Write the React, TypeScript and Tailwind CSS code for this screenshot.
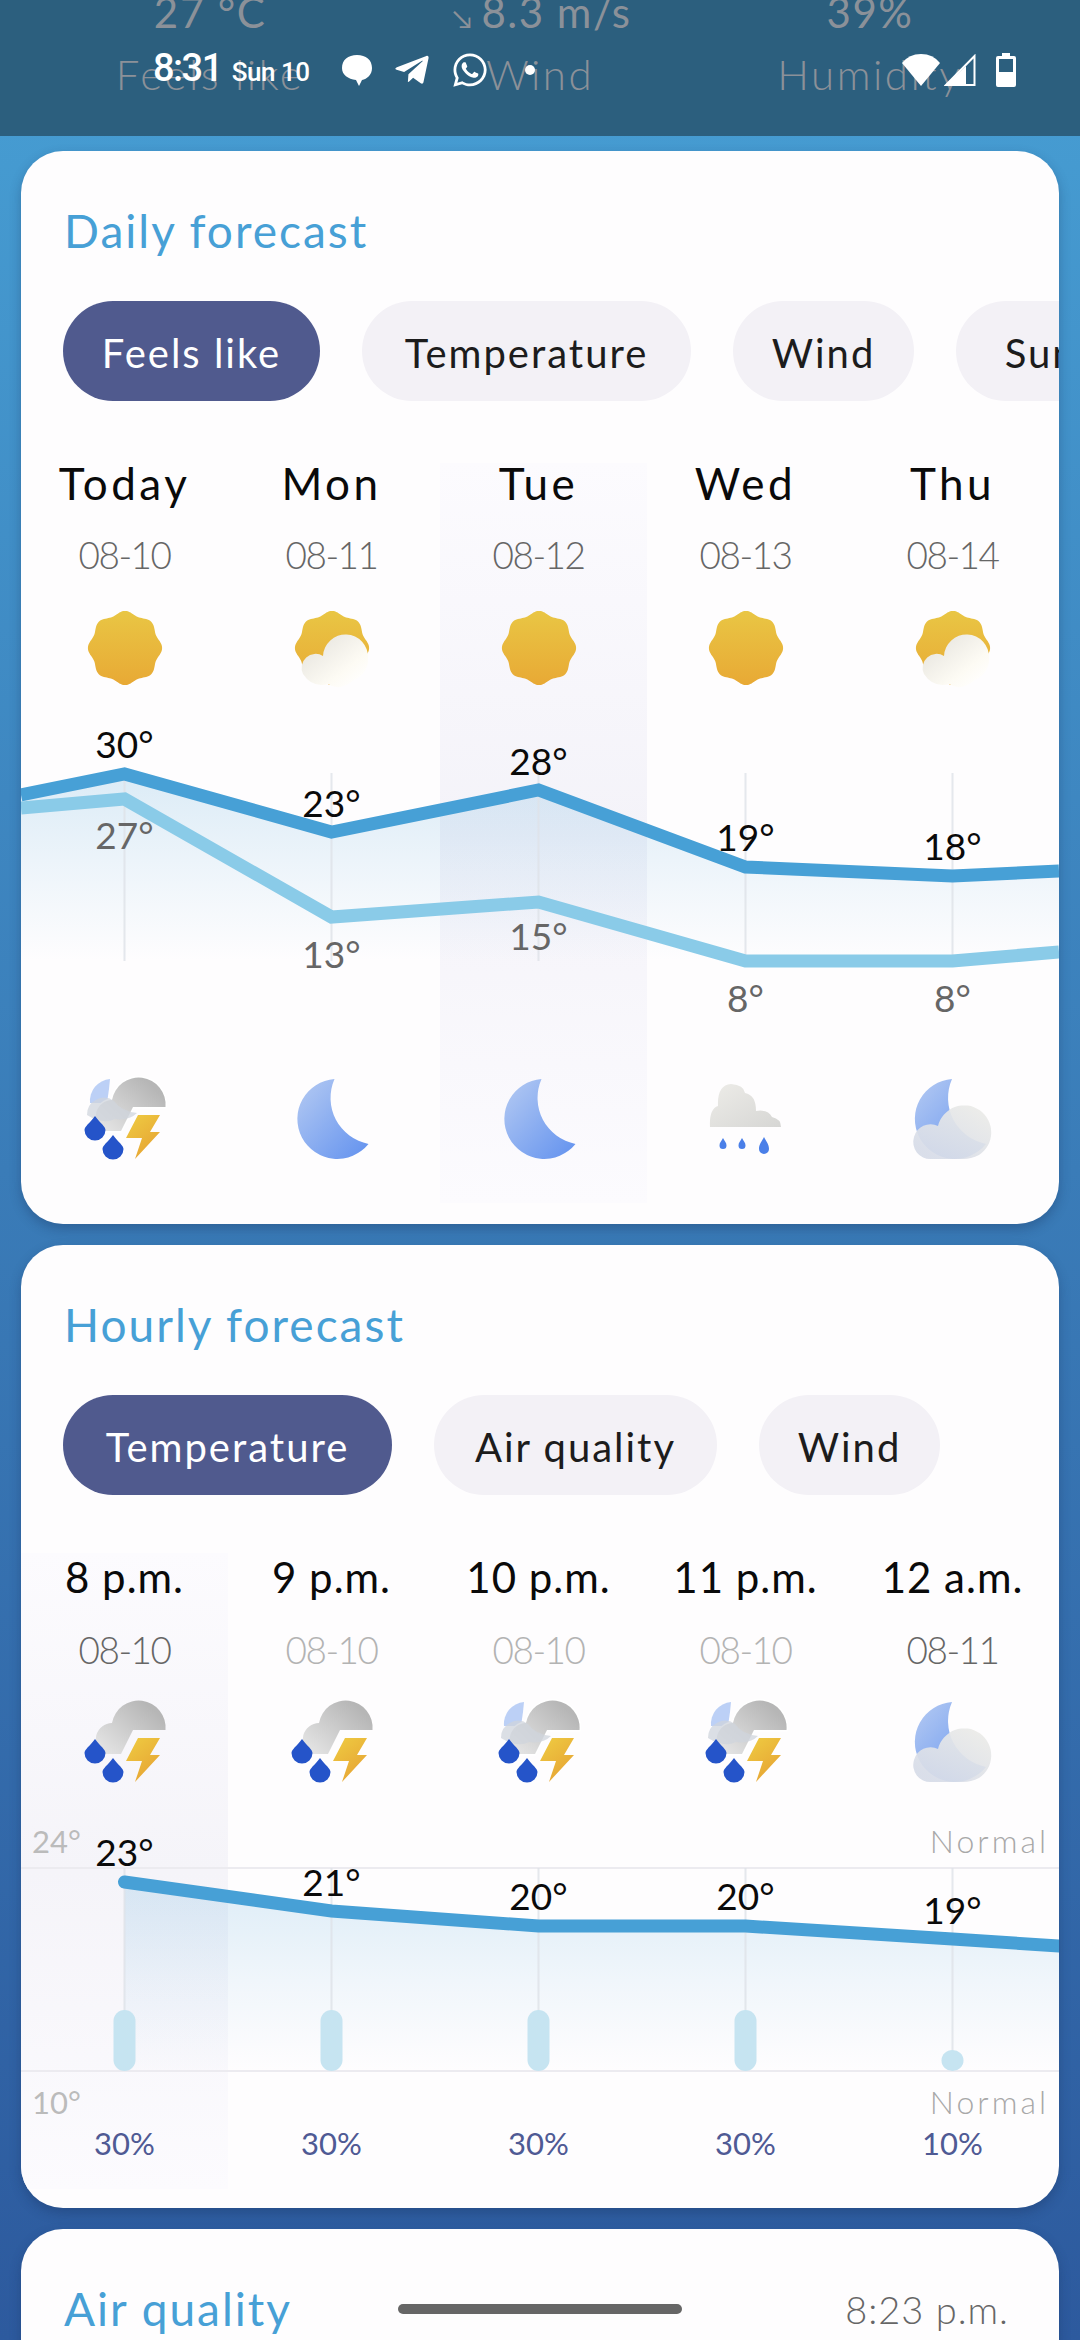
import React from 'react';
import { FaTelegramPlane, FaWhatsapp } from 'react-icons/fa';

const sunPath = (() => {
  const pts: string[] = [];
  for (let i = 0; i < 160; i++) {
    const t = (i / 160) * Math.PI * 2;
    const r = 35.3 + 1.8 * Math.cos(8 * t);
    pts.push(`${(40 + r * Math.sin(t)).toFixed(2)} ${(40 - r * Math.cos(t)).toFixed(2)}`);
  }
  return `M${pts.join('L')}Z`;
})();

const Defs = () => (
  <defs>
    <linearGradient id="sunG" x1="0" y1="0" x2="0" y2="1">
      <stop offset="0" stopColor="#e9c644" />
      <stop offset="1" stopColor="#e8a935" />
    </linearGradient>
    <linearGradient id="softCloud" x1="0.1" y1="0.1" x2="0.85" y2="0.85">
      <stop offset="0" stopColor="#e6e4de" />
      <stop offset="0.75" stopColor="#fdfbf4" />
      <stop offset="1" stopColor="#fffefc" />
    </linearGradient>
    <linearGradient id="moonG" x1="0.1" y1="0.1" x2="0.9" y2="0.9">
      <stop offset="0" stopColor="#adc5f2" />
      <stop offset="1" stopColor="#6a97ef" />
    </linearGradient>
    <linearGradient id="greyCloud" x1="0.05" y1="0.9" x2="0.85" y2="0.2">
      <stop offset="0" stopColor="#e4e4e4" />
      <stop offset="1" stopColor="#b6b6b6" />
    </linearGradient>
    <linearGradient id="bolt" x1="0.2" y1="0" x2="0.8" y2="1">
      <stop offset="0" stopColor="#eec941" />
      <stop offset="1" stopColor="#e6a133" />
    </linearGradient>
    <linearGradient id="rainCloud" x1="0" y1="0" x2="1" y2="1">
      <stop offset="0" stopColor="#edece8" />
      <stop offset="1" stopColor="#d6d6d4" />
    </linearGradient>
    <linearGradient id="nightCloud" x1="0.9" y1="0.1" x2="0.2" y2="0.9">
      <stop offset="0" stopColor="#ebebe8" />
      <stop offset="1" stopColor="#d7dce8" />
    </linearGradient>
  </defs>
);

const IconBox = ({ children }: { children: React.ReactNode }) => (
  <svg viewBox="0 0 80 80" className="w-20 h-20 overflow-visible mx-auto">
    <Defs />
    {children}
  </svg>
);

const Sun = () => (
  <IconBox>
    <path d={sunPath} fill="url(#sunG)" />
  </IconBox>
);

const SunCloud = () => (
  <IconBox>
    <path d={sunPath} fill="url(#sunG)" />
    <path
      d="M11 66 A14 14 0 0 1 31 48 A21 21 0 0 1 76 50 A22 22 0 0 1 62 72 Q48 84 36 76 Q20 80 11 66Z"
      fill="url(#softCloud)"
    />
  </IconBox>
);

const Moon = () => (
  <IconBox>
    <path d="M42.5 0 A40 40 0 1 0 76.5 65 A47 47 0 0 1 42.5 0Z" fill="url(#moonG)" />
  </IconBox>
);

const MoonCloud = () => (
  <IconBox>
    <path d="M39 0 A40 40 0 1 0 73 65 A47 47 0 0 1 39 0Z" fill="url(#moonG)" />
    <path
      d="M1 58 A17 17 0 0 1 25 47 A27 27 0 1 1 66 76 Q58 80 50 80 L18 80 A17 17 0 0 1 1 58Z"
      fill="url(#nightCloud)"
      opacity="0.93"
    />
  </IconBox>
);

const Drop = ({ x, y, r, h, fill }: { x: number; y: number; r: number; h: number; fill: string }) => (
  <path
    d={`M${x} ${y} C${x + r * 0.5} ${y + h * 0.3} ${x + r} ${y + h * 0.42} ${x + r} ${y + h - r} A${r} ${r} 0 0 1 ${x - r} ${y + h - r} C${x - r} ${y + h * 0.42} ${x - r * 0.5} ${y + h * 0.3} ${x} ${y}Z`}
    fill={fill}
  />
);

const RainCloud = () => (
  <IconBox>
    <path
      d="M4 48 Q3 30 12 27 Q11 6 25 5 Q38 6 39 14 Q50 16 50 32 Q62 30 66 38 Q75 40 75 48Z"
      fill="url(#rainCloud)"
    />
    <Drop x={17} y={59} r={3.5} h={11} fill="#4a7fe8" />
    <Drop x={36} y={59} r={3.5} h={11} fill="#4a7fe8" />
    <Drop x={58} y={58} r={5} h={17} fill="#4a7fe8" />
  </IconBox>
);

const Storm = ({ moon }: { moon?: boolean }) => (
  <IconBox>
    {moon && <path d="M25 0 A22 22 0 0 0 5 24 L22 24 L24 10 Z" fill="#bcd0f6" />}
    <path
      d="M80.5 28 A27 27 0 0 0 27 21 A17 17 0 0 0 18 52 L36 52 L48 28Z"
      fill="url(#greyCloud)"
      stroke={moon ? '#ffffff' : 'none'}
      strokeWidth="3"
      paintOrder="stroke"
    />
    {moon && (
      <path d="M2 36 A17 17 0 0 1 29 22 Q36 32 52 34 Q44 42 30 40 Q18 46 2 36Z" fill="#cfd4dc" opacity="0.75" />
    )}
    <Drop x={10} y={37} r={10.5} h={24.5} fill="#2554c9" />
    <Drop x={28} y={56} r={10.5} h={24.5} fill="#2554c9" />
    <path d="M53 36 L75 36 L65 53 L75 53 L50 80 L57 59 L41 59Z" fill="url(#bolt)" />
  </IconBox>
);

const Chip = ({ label, width, on }: { label: string; width: string; on?: boolean }) => (
  <div
    className={`${width} h-[100px] shrink-0 rounded-full flex items-center justify-center pt-1 text-[40px] tracking-[2px] ${
      on ? 'bg-[#505a8e] text-white' : 'bg-[#f3f1f6] text-[#1c1c1c]'
    }`}
  >
    {label}
  </div>
);

const dailyCols = [
  { day: 'Today', date: '08-10', icon: <Sun /> },
  { day: 'Mon', date: '08-11', icon: <SunCloud /> },
  { day: 'Tue', date: '08-12', icon: <Sun /> },
  { day: 'Wed', date: '08-13', icon: <Sun /> },
  { day: 'Thu', date: '08-14', icon: <SunCloud /> },
];

const nightIcons = [<Storm moon key="a" />, <Moon key="b" />, <Moon key="c" />, <RainCloud key="d" />, <MoonCloud key="e" />];

const xs = [124.5, 331.5, 538.5, 745.5, 952.5];

const DailyChart = () => {
  const high = [774, 832, 790, 867, 876];
  const low = [799, 917, 902, 961, 961];
  const line = (ys: number[], l: number, r: number) =>
    `21,${l} ${ys.map((y, i) => `${xs[i]},${y}`).join(' ')} 1059,${r}`;
  const highLabels = [
    { t: '30°', y: 758 },
    { t: '23°', y: 817 },
    { t: '28°', y: 775 },
    { t: '19°', y: 851 },
    { t: '18°', y: 860 },
  ];
  const lowLabels = [
    { t: '27°', y: 849 },
    { t: '13°', y: 968 },
    { t: '15°', y: 950 },
    { t: '8°', y: 1012 },
    { t: '8°', y: 1012 },
  ];
  return (
    <svg viewBox="21 720 1038 330" className="relative w-[1038px] h-[330px] block mt-8">
      <defs>
        <linearGradient id="dailyFill" gradientUnits="userSpaceOnUse" x1="0" y1="774" x2="0" y2="961">
          <stop offset="0" stopColor="#47a0d6" stopOpacity="0.19" />
          <stop offset="0.5" stopColor="#47a0d6" stopOpacity="0.09" />
          <stop offset="1" stopColor="#47a0d6" stopOpacity="0" />
        </linearGradient>
      </defs>
      <polygon points={`${line(high, 795, 871)} 1059,961 21,961`} fill="url(#dailyFill)" />
      {xs.map((x) => (
        <line key={x} x1={x} x2={x} y1="773" y2="961" stroke="#dfe3e9" strokeWidth="2" opacity="0.8" />
      ))}
      <polyline points={line(low, 808, 952)} fill="none" stroke="#8acbe8" strokeWidth="13" strokeLinejoin="miter" />
      <polyline points={line(high, 795, 871)} fill="none" stroke="#47a0d6" strokeWidth="13" strokeLinejoin="miter" />
      {highLabels.map((l, i) => (
        <text key={i} x={xs[i]} y={l.y} textAnchor="middle" fontSize="37" fill="#0a0a0a">
          {l.t}
        </text>
      ))}
      {lowLabels.map((l, i) => (
        <text key={i} x={xs[i]} y={l.y} textAnchor="middle" fontSize="37" fill="#666666">
          {l.t}
        </text>
      ))}
    </svg>
  );
};

const hourlyCols = [
  { time: '8 p.m.', date: '08-10', dim: false, icon: <Storm /> },
  { time: '9 p.m.', date: '08-10', dim: true, icon: <Storm /> },
  { time: '10 p.m.', date: '08-10', dim: true, icon: <Storm moon /> },
  { time: '11 p.m.', date: '08-10', dim: true, icon: <Storm moon /> },
  { time: '12 a.m.', date: '08-11', dim: false, icon: <MoonCloud /> },
];

const HourlyChart = () => {
  const ys = [1882, 1911, 1926, 1926, 1939];
  const points = `${ys.map((y, i) => `${xs[i]},${y}`).join(' ')} 1059,1946`;
  const temps = [
    { t: '23°', y: 1866 },
    { t: '21°', y: 1896 },
    { t: '20°', y: 1910 },
    { t: '20°', y: 1910 },
    { t: '19°', y: 1924 },
  ];
  const rain = [
    { t: '30%', top: 2010 },
    { t: '30%', top: 2010 },
    { t: '30%', top: 2010 },
    { t: '30%', top: 2010 },
    { t: '10%', top: 2050 },
  ];
  return (
    <svg viewBox="21 1800 1038 365" className="relative w-[1038px] h-[365px] block mt-[18px]">
      <defs>
        <linearGradient id="hourlyFill" gradientUnits="userSpaceOnUse" x1="0" y1="1882" x2="0" y2="2071">
          <stop offset="0" stopColor="#47a0d6" stopOpacity="0.18" />
          <stop offset="0.55" stopColor="#47a0d6" stopOpacity="0.07" />
          <stop offset="1" stopColor="#47a0d6" stopOpacity="0" />
        </linearGradient>
      </defs>
      <line x1="21" x2="1059" y1="1868" y2="1868" stroke="#ecebf0" strokeWidth="2" />
      <line x1="21" x2="1059" y1="2071" y2="2071" stroke="#ecebf0" strokeWidth="2" />
      <polygon points={`${points} 1059,2071 124.5,2071`} fill="url(#hourlyFill)" />
      {xs.map((x) => (
        <line key={x} x1={x} x2={x} y1="1868" y2="2071" stroke="#dfe3e9" strokeWidth="2" opacity="0.8" />
      ))}
      {rain.map((r, i) => (
        <rect key={i} x={xs[i] - 11} y={r.top} width="22" height={2071 - r.top} rx="11" fill="#c6e4f1" />
      ))}
      <polyline points={points} fill="none" stroke="#47a0d6" strokeWidth="13" strokeLinecap="round" strokeLinejoin="miter" />
      {temps.map((l, i) => (
        <text key={i} x={xs[i]} y={l.y} textAnchor="middle" fontSize="37" fill="#0a0a0a">
          {l.t}
        </text>
      ))}
      <text x="32" y="1853" fontSize="31" fill="#bbbbbb">24°</text>
      <text x="32" y="2114" fontSize="31" fill="#bbbbbb">10°</text>
      <text x="1049" y="1853" textAnchor="end" fontSize="32" letterSpacing="3" fontWeight="300" fill="#a8a8a8">Normal</text>
      <text x="1049" y="2114" textAnchor="end" fontSize="32" letterSpacing="3" fontWeight="300" fill="#a8a8a8">Normal</text>
      {rain.map((r, i) => (
        <text key={i} x={xs[i]} y="2155" textAnchor="middle" fontSize="31" fill="#4f5a94">
          {r.t}
        </text>
      ))}
    </svg>
  );
};

const Card = ({ children, className }: { children: React.ReactNode; className: string }) => (
  <div className={`relative mx-[21px] bg-[#fefdfe] rounded-[42px] shadow-[0_5px_12px_rgba(20,40,80,0.3)] overflow-hidden ${className}`}>
    {children}
  </div>
);

const Title = ({ children }: { children: React.ReactNode }) => (
  <h2 className="relative pl-[43px] pt-[50px] text-[46px] leading-[60px] tracking-[2px] text-[#47a0d6]">{children}</h2>
);

const StatusBar = () => (
  <div className="absolute top-[50px] left-[153px] right-[64px] h-[40px] flex items-center justify-between text-white font-['Roboto',sans-serif]">
    <div className="flex items-center">
      <span className="text-[38px] font-medium tracking-[-1.5px] leading-none -mt-1">8:31</span>
      <span className="ml-[10px] text-[26px] font-medium tracking-[-0.5px] leading-none mt-1">Sun 10</span>
      <svg viewBox="0 0 30 32" className="ml-[32px] w-[30px] h-[32px] fill-white">
        <path d="M15 1 C24 1 30 6 30 14 C30 21 25 25 20 26 L17 32 L14 26 C6 25 0 21 0 14 C0 6 6 1 15 1Z" />
      </svg>
      <FaTelegramPlane className="ml-[21px] w-[38px] h-[38px]" />
      <FaWhatsapp className="ml-[20px] w-[38px] h-[38px]" />
      <span className="ml-[36px] w-[10px] h-[10px] rounded-full bg-white" />
    </div>
    <div className="flex items-center">
      <svg viewBox="0 0 40 32" className="w-[40px] h-[32px] fill-white">
        <path d="M20 32 L1 9 Q8 0 20 0 Q32 0 39 9Z" />
      </svg>
      <svg viewBox="0 0 32 32" className="ml-[3px] w-[32px] h-[32px]">
        <path d="M30.5 2 L30.5 31 L2 31Z" fill="none" stroke="white" strokeWidth="2" />
        <path d="M22 12 L22 31 L2 31Z" fill="white" />
      </svg>
      <svg viewBox="0 0 20 34" className="ml-[20px] w-[20px] h-[34px]">
        <path d="M6 0 H14 V3 H18 Q20 3 20 5 V32 Q20 34 18 34 H2 Q0 34 0 32 V5 Q0 3 2 3 H6Z" fill="white" />
        <rect x="3" y="6" width="14" height="13" fill="#2c5f7e" />
      </svg>
    </div>
  </div>
);

const Header = () => (
  <div className="relative h-[136px] overflow-hidden bg-[#2c5f7e] text-[#8b9199]">
    <div className="grid grid-cols-3 px-[45px] -mt-[13px] text-center tracking-[2.5px]">
      <span className="text-[42px] leading-[50px] tracking-[1.5px]">27 °C</span>
      <span className="text-[42px] leading-[50px] tracking-[1.5px] pl-1">
        <span className="text-[26px] mr-2">↘</span>8.3 m/s
      </span>
      <span className="text-[42px] leading-[50px] tracking-[1.5px]">39%</span>
      <span className="mt-[4px] text-[42px] leading-[54px] font-light">Feels like</span>
      <span className="mt-[4px] text-[42px] leading-[54px] font-light">Wind</span>
      <span className="mt-[4px] text-[42px] leading-[54px] font-light">Humidity</span>
    </div>
    <StatusBar />
  </div>
);

export default function App() {
  return (
    <div className="relative w-[1080px] h-[2340px] overflow-hidden font-['Lato',sans-serif] bg-gradient-to-b from-[#479fd4] via-[#3a7cb8] to-[#2d5a9e]">
      <Header />

      <Card className="mt-[15px] h-[1073px]">
        {/* highlighted Tue column */}
        <div className="absolute left-[419px] top-[312px] w-[207px] h-[740px] bg-gradient-to-b from-[#fcfbfe] via-[#f4f3f9] to-[#fcfbfe]" />
        <Title>Daily forecast</Title>
        <div className="relative mt-[40px] pl-[42px] flex gap-[42px] overflow-hidden">
          <Chip label="Feels like" width="w-[257px]" on />
          <Chip label="Temperature" width="w-[329px]" />
          <Chip label="Wind" width="w-[181px]" />
          <Chip label="Sunrise" width="w-[240px]" />
        </div>
        <div className="relative grid grid-cols-[repeat(5,207px)] mt-[52px] text-center">
          {dailyCols.map((c) => (
            <div key={c.day}>
              <div className="text-[44px] leading-[60px] tracking-[3.5px] text-[#0a0a0a]">{c.day}</div>
              <div className="mt-[17px] text-[37px] leading-[50px] tracking-[-1.5px] font-light text-[#666666]">{c.date}</div>
              <div className="mt-[28px]">{c.icon}</div>
            </div>
          ))}
        </div>
        <DailyChart />
        <div className="relative grid grid-cols-[repeat(5,207px)] mt-[29px]">
          {nightIcons.map((icon, i) => (
            <div key={i}>{icon}</div>
          ))}
        </div>
      </Card>

      <Card className="mt-[21px] h-[963px]">
        <div className="absolute left-0 top-[308px] w-[207px] h-[636px] bg-gradient-to-b from-[#fcfbfe] via-[#f5f4f9] to-[#fcfbfe]" />
        <Title>Hourly forecast</Title>
        <div className="relative mt-[40px] pl-[42px] flex gap-[42px]">
          <Chip label="Temperature" width="w-[329px]" on />
          <Chip label="Air quality" width="w-[283px]" />
          <Chip label="Wind" width="w-[181px]" />
        </div>
        <div className="relative grid grid-cols-[repeat(5,207px)] mt-[52px] text-center">
          {hourlyCols.map((c) => (
            <div key={c.time}>
              <div className="text-[42px] leading-[60px] tracking-[1px] text-[#0a0a0a]">{c.time}</div>
              <div className={`mt-[18px] text-[37px] leading-[50px] tracking-[-1.5px] font-light ${c.dim ? 'text-[#b3b3b3]' : 'text-[#666666]'}`}>
                {c.date}
              </div>
              <div className="mt-[27px]">{c.icon}</div>
            </div>
          ))}
        </div>
        <HourlyChart />
      </Card>

      <Card className="mt-[21px] h-[300px]">
        <div className="flex items-center justify-between pr-[50px]">
          <Title>Air quality</Title>
          <span className="pt-[50px] text-[38px] leading-[60px] tracking-[1px] font-light text-[#666666]">8:23 p.m.</span>
        </div>
      </Card>

      <div className="absolute left-[398px] top-[2304px] w-[284px] h-[10px] rounded-full bg-[#666666]" />
    </div>
  );
}
